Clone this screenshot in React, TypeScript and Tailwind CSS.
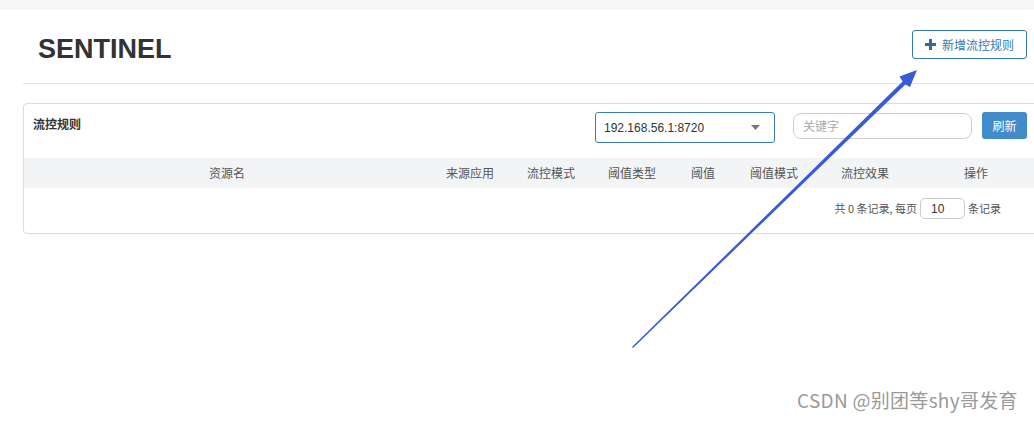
import React from "react";

const cjk = "font-['Microsoft_YaHei','Noto_Sans_CJK_SC',sans-serif]";

const columns = [
  { label: "资源名", w: "w-[406px]" },
  { label: "来源应用", w: "w-[80px]" },
  { label: "流控模式", w: "w-[82px]" },
  { label: "阈值类型", w: "w-[80px]" },
  { label: "阈值", w: "w-[62px]" },
  { label: "阈值模式", w: "w-[80px]" },
  { label: "流控效果", w: "w-[102px]" },
  { label: "操作", w: "w-[120px]" },
];

export default function App() {
  return (
    <div className={`relative w-[1034px] h-[422px] overflow-hidden bg-white ${cjk}`}>
      <div className="h-[10px] bg-[#f6f6f6]" />

      {/* Page header */}
      <div className="w-[1022px] ml-[23px]">
        <div className="flex justify-between h-[74px] border-b border-[#e3e3e3] pr-[18px]">
          <div className="mt-[23px] ml-[15px] text-[27px] leading-[32px] font-bold text-[#333] font-['Liberation_Sans',Arial,sans-serif]">
            SENTINEL
          </div>
          <button className="mt-[20px] h-[29px] w-[115px] flex items-center justify-center gap-[6px] border border-[#337ab7] rounded-[3px] text-[#337ab7] text-[12px]">
            <svg width="11" height="11" viewBox="0 0 11 11">
              <path d="M4 0h3v4h4v3H7v4H4V7H0V4h4z" fill="#2d6ca2" />
            </svg>
            <span>新增流控规则</span>
          </button>
        </div>

        {/* Rules card */}
        <div className="mt-[19px] border border-[#dcdcdc] rounded-[4px]">
          <div className="flex items-start pt-[8px] h-[54px]">
            <div className="ml-[9px] mt-[3px] text-[12px] font-bold text-[#333] w-[562px]">
              流控规则
            </div>
            <div className="w-[180px] h-[31px] border border-[#3d7bb6] rounded-[3px] flex items-center justify-between pl-[8px] pr-[14px]">
              <span className="text-[12px] text-[#333] font-['Liberation_Sans',Arial,sans-serif]">
                192.168.56.1:8720
              </span>
              <svg width="9" height="5" viewBox="0 0 9 5">
                <path d="M0 0h9L4.5 5z" fill="#777" />
              </svg>
            </div>
            <div className="ml-[18px] mt-[1px] w-[179px] h-[26px] border border-[#cfcfcf] rounded-[8px] flex items-center pl-[9px] text-[12px] text-[#aaa]">
              关键字
            </div>
            <button className="ml-[10px] w-[45px] h-[27px] rounded-[3px] bg-[#428bca] text-white text-[12px]">
              刷新
            </button>
          </div>

          <div className="h-[30px] bg-[#f3f4f5] flex items-center text-[12px] text-[#555]">
            {columns.map((c) => (
              <div key={c.label} className={`${c.w} shrink-0 text-center`}>
                {c.label}
              </div>
            ))}
          </div>

          <div className="flex items-center justify-end h-[45px] pr-[43px] pb-[4px] text-[11px] text-[#555]">
            <span>共 0 条记录, 每页</span>
            <div className="mx-[3px] w-[45px] h-[21px] border border-[#ccc] rounded-[5px] flex items-center pl-[10px] text-[12px] text-[#333] font-['Liberation_Sans',Arial,sans-serif]">
              10
            </div>
            <span>条记录</span>
          </div>
        </div>
      </div>

      {/* Annotation arrow */}
      <svg className="absolute inset-0 pointer-events-none" width="1034" height="422" viewBox="0 0 1034 422">
        <polygon
          points="632,347 902.6,81.6 899.5,76.5 917,70 910,87 905.4,84.4 633,348"
          fill="#3a5bd6"
        />
      </svg>

      {/* Watermark */}
      <div className="absolute left-[797px] top-[386px] text-[19px] tracking-[0.3px] text-[#9a9a9a] leading-[28px]">
        CSDN @别团等shy哥发育
      </div>
    </div>
  );
}
